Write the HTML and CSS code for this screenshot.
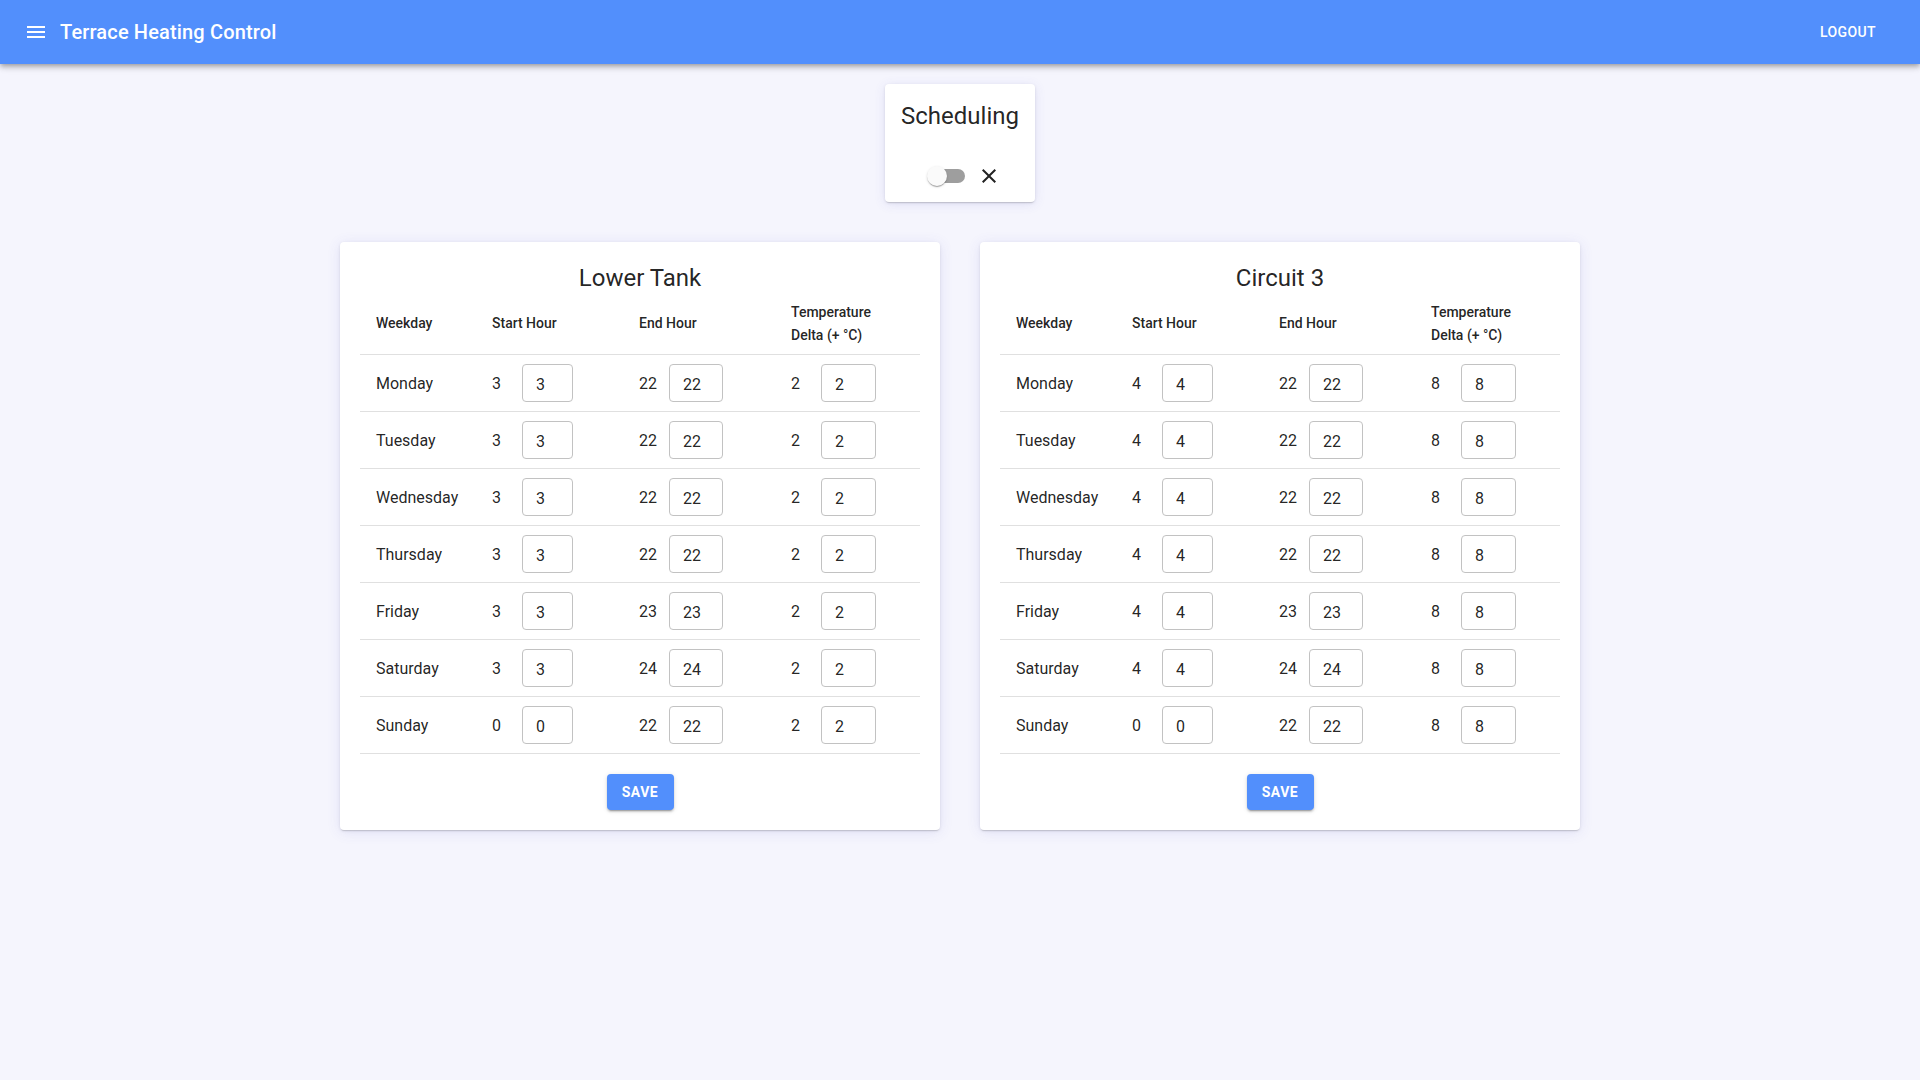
FILE: index.html
```html
<!DOCTYPE html>
<html lang="en">
<head>
<meta charset="utf-8">
<title>Terrace Heating Control</title>
<link rel="stylesheet" href="styles.css">
</head>
<body>
<header class="app-bar">
  <div class="bar-left">
    <svg class="menu-icon" viewBox="0 0 24 24" width="24" height="24"><path fill="#fff" d="M3 18h18v-2H3v2zm0-5h18v-2H3v2zm0-7v2h18V6H3z"/></svg>
    <span class="app-title">Terrace Heating Control</span>
  </div>
  <button class="logout">LOGOUT</button>
</header>

<main class="content">
  <section class="sched-card">
    <h2 class="sched-title">Scheduling</h2>
    <div class="sched-controls">
      <span class="switch"><span class="track"></span><span class="thumb"></span></span>
      <svg class="close-icon" viewBox="0 0 24 24" width="24" height="24"><path fill="#222" d="M19 6.41L17.59 5 12 10.59 6.41 5 5 6.41 10.59 12 5 17.59 6.41 19 12 13.41 17.59 19 19 17.59 13.41 12z"/></svg>
    </div>
  </section>

  <div class="cards">
    <section class="card">
      <h2 class="card-title">Lower Tank</h2>
      <div class="grid">
        <div class="row head">
          <div class="cell">Weekday</div>
          <div class="cell">Start Hour</div>
          <div class="cell">End Hour</div>
          <div class="cell">Temperature<br>Delta (+ °C)</div>
        </div>
        <div class="row"><div class="cell">Monday</div><div class="cell"><span class="val">3</span><input class="in start" value="3"></div><div class="cell"><span class="val">22</span><input class="in end" value="22"></div><div class="cell"><span class="val">2</span><input class="in temp" value="2"></div></div>
        <div class="row"><div class="cell">Tuesday</div><div class="cell"><span class="val">3</span><input class="in start" value="3"></div><div class="cell"><span class="val">22</span><input class="in end" value="22"></div><div class="cell"><span class="val">2</span><input class="in temp" value="2"></div></div>
        <div class="row"><div class="cell">Wednesday</div><div class="cell"><span class="val">3</span><input class="in start" value="3"></div><div class="cell"><span class="val">22</span><input class="in end" value="22"></div><div class="cell"><span class="val">2</span><input class="in temp" value="2"></div></div>
        <div class="row"><div class="cell">Thursday</div><div class="cell"><span class="val">3</span><input class="in start" value="3"></div><div class="cell"><span class="val">22</span><input class="in end" value="22"></div><div class="cell"><span class="val">2</span><input class="in temp" value="2"></div></div>
        <div class="row"><div class="cell">Friday</div><div class="cell"><span class="val">3</span><input class="in start" value="3"></div><div class="cell"><span class="val">23</span><input class="in end" value="23"></div><div class="cell"><span class="val">2</span><input class="in temp" value="2"></div></div>
        <div class="row"><div class="cell">Saturday</div><div class="cell"><span class="val">3</span><input class="in start" value="3"></div><div class="cell"><span class="val">24</span><input class="in end" value="24"></div><div class="cell"><span class="val">2</span><input class="in temp" value="2"></div></div>
        <div class="row"><div class="cell">Sunday</div><div class="cell"><span class="val">0</span><input class="in start" value="0"></div><div class="cell"><span class="val">22</span><input class="in end" value="22"></div><div class="cell"><span class="val">2</span><input class="in temp" value="2"></div></div>
      </div>
      <div class="actions"><button class="save">SAVE</button></div>
    </section>

    <section class="card">
      <h2 class="card-title">Circuit 3</h2>
      <div class="grid">
        <div class="row head">
          <div class="cell">Weekday</div>
          <div class="cell">Start Hour</div>
          <div class="cell">End Hour</div>
          <div class="cell">Temperature<br>Delta (+ °C)</div>
        </div>
        <div class="row"><div class="cell">Monday</div><div class="cell"><span class="val">4</span><input class="in start" value="4"></div><div class="cell"><span class="val">22</span><input class="in end" value="22"></div><div class="cell"><span class="val">8</span><input class="in temp" value="8"></div></div>
        <div class="row"><div class="cell">Tuesday</div><div class="cell"><span class="val">4</span><input class="in start" value="4"></div><div class="cell"><span class="val">22</span><input class="in end" value="22"></div><div class="cell"><span class="val">8</span><input class="in temp" value="8"></div></div>
        <div class="row"><div class="cell">Wednesday</div><div class="cell"><span class="val">4</span><input class="in start" value="4"></div><div class="cell"><span class="val">22</span><input class="in end" value="22"></div><div class="cell"><span class="val">8</span><input class="in temp" value="8"></div></div>
        <div class="row"><div class="cell">Thursday</div><div class="cell"><span class="val">4</span><input class="in start" value="4"></div><div class="cell"><span class="val">22</span><input class="in end" value="22"></div><div class="cell"><span class="val">8</span><input class="in temp" value="8"></div></div>
        <div class="row"><div class="cell">Friday</div><div class="cell"><span class="val">4</span><input class="in start" value="4"></div><div class="cell"><span class="val">23</span><input class="in end" value="23"></div><div class="cell"><span class="val">8</span><input class="in temp" value="8"></div></div>
        <div class="row"><div class="cell">Saturday</div><div class="cell"><span class="val">4</span><input class="in start" value="4"></div><div class="cell"><span class="val">24</span><input class="in end" value="24"></div><div class="cell"><span class="val">8</span><input class="in temp" value="8"></div></div>
        <div class="row"><div class="cell">Sunday</div><div class="cell"><span class="val">0</span><input class="in start" value="0"></div><div class="cell"><span class="val">22</span><input class="in end" value="22"></div><div class="cell"><span class="val">8</span><input class="in temp" value="8"></div></div>
      </div>
      <div class="actions"><button class="save">SAVE</button></div>
    </section>
  </div>
</main>
</body>
</html>
```

FILE: styles.css
```css
* { box-sizing: border-box; }

html, body {
  margin: 0;
  padding: 0;
}

body {
  font-family: Roboto, "Liberation Sans", sans-serif;
  background: #f5f5fd;
  color: rgba(0, 0, 0, 0.87);
  min-height: 1080px;
}

.app-bar {
  height: 64px;
  background: #528ffc;
  display: flex;
  align-items: center;
  justify-content: space-between;
  padding: 0 28px 0 24px;
  box-shadow: 0 2px 4px -1px rgba(0,0,0,.2), 0 4px 5px 0 rgba(0,0,0,.14), 0 1px 10px 0 rgba(0,0,0,.12);
  position: relative;
  z-index: 2;
}

.bar-left {
  display: flex;
  align-items: center;
}

.menu-icon { display: block; }

.app-title {
  margin-left: 12px;
  color: #fff;
  font-size: 20px;
  font-weight: 500;
  letter-spacing: 0.15px;
  line-height: 32px;
}

.logout {
  background: transparent;
  border: 0;
  color: #fff;
  font-family: inherit;
  font-size: 14px;
  font-weight: 500;
  letter-spacing: 0.4px;
  height: 36px;
  padding: 0 16px;
}

.content {
  display: flex;
  flex-direction: column;
  align-items: center;
  padding-top: 20px;
}

.sched-card {
  width: 150px;
  height: 118px;
  background: #fff;
  border-radius: 4px;
  box-shadow: 0 2px 1px -1px rgba(0,0,0,.12), 0 1px 3px 0 rgba(0,0,0,.1), 0 2px 12px 0 rgba(70,70,200,.12);
  padding-top: 16px;
}

.sched-title {
  margin: 0;
  font-size: 24px;
  font-weight: 400;
  line-height: 32px;
  text-align: center;
  color: rgba(0,0,0,.87);
}

.sched-controls {
  margin-top: 32px;
  display: flex;
  align-items: center;
  justify-content: center;
  padding-left: 7px;
  height: 24px;
}

.switch {
  position: relative;
  width: 38px;
  height: 20px;
  display: inline-block;
}

.track {
  position: absolute;
  left: 4px;
  top: 3px;
  width: 34px;
  height: 14px;
  border-radius: 7px;
  background: #9e9e9e;
}

.thumb {
  position: absolute;
  left: 0;
  top: 0;
  width: 20px;
  height: 20px;
  border-radius: 50%;
  background: #fafafa;
  box-shadow: 0 2px 1px -1px rgba(0,0,0,.2), 0 1px 1px 0 rgba(0,0,0,.14), 0 1px 3px 0 rgba(0,0,0,.12);
}

.close-icon {
  display: block;
  margin-left: 12px;
}

.cards {
  margin-top: 40px;
  display: flex;
  gap: 40px;
  justify-content: center;
}

.card {
  width: 600px;
  background: #fff;
  border-radius: 4px;
  box-shadow: 0 2px 1px -1px rgba(0,0,0,.12), 0 1px 3px 0 rgba(0,0,0,.1), 0 2px 14px 0 rgba(70,70,200,.12);
  padding: 20px 20px 20px;
}

.card-title {
  margin: 0;
  font-size: 24px;
  font-weight: 400;
  line-height: 32px;
  text-align: center;
  color: rgba(0,0,0,.87);
}

.grid {
  display: flex;
  flex-direction: column;
}

.row {
  display: grid;
  grid-template-columns: 116px 147px 152px 1fr;
  height: 57px;
  border-bottom: 1px solid rgba(0,0,0,.12);
  align-items: center;
  font-size: 16px;
}

.row.head {
  height: 61px;
  font-size: 14px;
  font-weight: 500;
  line-height: 23px;
  padding-bottom: 1px;
}

.cell {
  padding-left: 16px;
  display: flex;
  align-items: center;
}

.row.head .cell { display: block; }

.val {
  width: 30px;
  flex: none;
}

.in {
  height: 38px;
  border: 1px solid #c2c2c2;
  border-radius: 4px;
  padding: 2px 0 0 13px;
  font-family: inherit;
  font-size: 16px;
  color: rgba(0,0,0,.87);
  background: #fff;
  outline: none;
}

.in.start { width: 51px; }
.in.end { width: 54px; }
.in.temp { width: 55px; }

.actions {
  margin-top: 20px;
  display: flex;
  justify-content: center;
}

.save {
  width: 67px;
  height: 36px;
  border: 0;
  border-radius: 4px;
  background: #528ffc;
  color: #fff;
  font-family: inherit;
  font-size: 14px;
  font-weight: 700;
  letter-spacing: 0.5px;
  box-shadow: 0 3px 1px -2px rgba(0,0,0,.2), 0 2px 2px 0 rgba(0,0,0,.14), 0 1px 5px 0 rgba(0,0,0,.12);
}
```
